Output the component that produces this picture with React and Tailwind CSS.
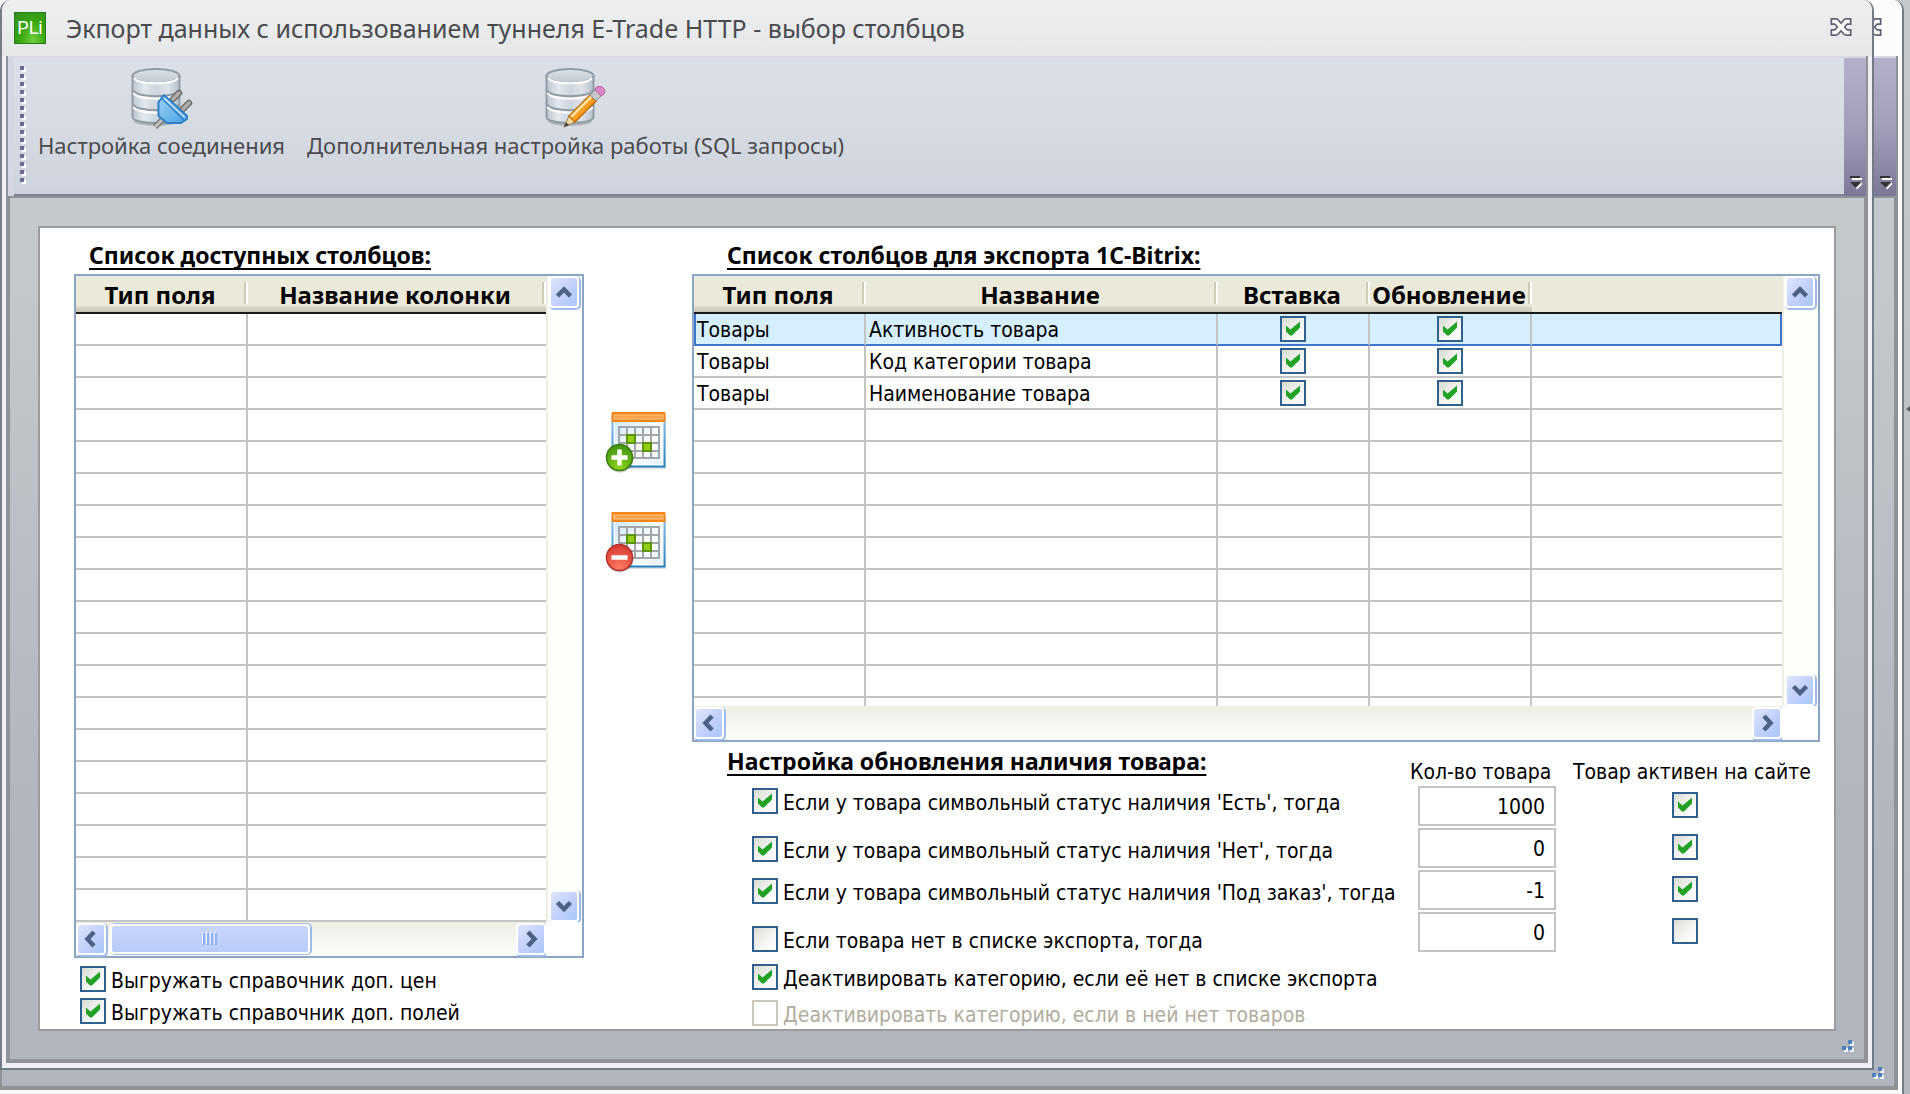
import React from "react";

const UI = "font-['DejaVu_Sans_Condensed','DejaVu_Sans',sans-serif]";
const HEADING = "font-['Noto_Sans',sans-serif] text-[23px] leading-8 font-bold underline decoration-2 underline-offset-4 [text-decoration-skip-ink:none] whitespace-nowrap text-black";

function CheckBox({ id, label, checked = false, disabled = false }) {
  return (
    <span className="inline-grid size-[26px] shrink-0">
      <input
        id={id}
        type="checkbox"
        aria-label={label}
        defaultChecked={checked}
        disabled={disabled}
        className="peer col-start-1 row-start-1 size-[26px] appearance-none border-2 border-[#2f618f] bg-linear-to-br from-[#dadad4] via-[#f3f3f0] to-white disabled:border-[#cbc8bb] disabled:from-white disabled:via-white"
      />
      <svg viewBox="0 0 26 26" className="pointer-events-none invisible col-start-1 row-start-1 size-[26px] peer-checked:visible">
        <path d="M6 9.500 L10.500 13.500 L20 5.500 V11.500 L12 19.500 H10 L6 15.500 Z" fill="#22a127" />
      </svg>
    </span>
  );
}

function CheckLine({ id, text, checked, disabled, height }) {
  return (
    <div className={`flex items-start gap-[5px] ${height}`}>
      <CheckBox id={id} checked={checked} disabled={disabled} />
      <label htmlFor={id} className={`text-[21px] leading-[30px] whitespace-nowrap ${disabled ? "text-[#b0ad9d]" : "text-black"}`}>
        {text}
      </label>
    </div>
  );
}

const chevrons = {
  up: "M5.500 16 L12 9.500 L18.500 16",
  down: "M5.500 8.500 L12 15 L18.500 8.500",
  left: "M15 5 L8.500 12 L15 19",
  right: "M9 5 L15.500 12 L9 19",
};

function ScrollButton({ dir, label }) {
  return (
    <button
      type="button"
      aria-label={label}
      className="flex h-8 w-[30px] shrink-0 items-center justify-center rounded-[4px] border-2 border-white bg-linear-to-br from-[#dfe6fe] via-[#c3d1fc] to-[#aac6f8] shadow-[1px_1px_0_1px_#9dbbe6]"
    >
      <svg viewBox="0 0 24 24" className="size-6" fill="none" stroke="#4d6185" strokeWidth="4.500">
        <path d={chevrons[dir]} />
      </svg>
    </button>
  );
}

function GridFrame({ bodyHeight, thumb, children }) {
  return (
    <div className="border-2 border-[#8aa6c4] bg-white">
      <div className="grid grid-cols-[1fr_36px]">
        <div className={`overflow-hidden ${bodyHeight}`}>{children}</div>
        <div className="flex flex-col items-center justify-between border-l-2 border-[#eeeee6] bg-[#fefefa] pr-[3px]">
          <ScrollButton dir="up" label="Прокрутить вверх" />
          <ScrollButton dir="down" label="Прокрутить вниз" />
        </div>
        <div className="flex h-[34px] items-center bg-linear-to-b from-[#eeede6] to-[#fefefa]">
          <ScrollButton dir="left" label="Прокрутить влево" />
          <div className="flex flex-1 pl-1">
            {thumb && (
              <div className="flex h-[30px] w-[200px] items-center justify-center gap-[2px] rounded-[4px] border-2 border-white bg-linear-to-b from-[#c9d6fc] to-[#b8cbf8] shadow-[1px_0_0_1px_#9dbbe6]">
                {[0, 1, 2, 3].map((i) => (
                  <span key={i} className="h-3 w-[2px] bg-[#8cb0f8] shadow-[-1px_-1px_0_#eef4fe]" />
                ))}
              </div>
            )}
          </div>
          <ScrollButton dir="right" label="Прокрутить вправо" />
        </div>
        <div className="bg-white" />
      </div>
    </div>
  );
}

function HeadCell({ children }) {
  return (
    <th className="h-[38px] border-b-2 border-[#1c1a16] bg-[linear-gradient(#ebe9d9_30px,#ddd9c8_31px,#c9c5b4_36px)] p-0 align-top">
      <div className="flex h-9">
        <span className="flex min-w-0 flex-1 justify-center pt-px font-['Noto_Sans',sans-serif] text-[24px] leading-9 font-bold whitespace-nowrap text-black">
          {children}
        </span>
        <span className="mt-[6px] h-[22px] w-1 border-l-2 border-[#cfcbb9] bg-white" />
      </div>
    </th>
  );
}

const LINE = "h-8 border-b-2 border-[#c4c4c4] p-0";

function AvailableTable() {
  return (
    <table className="w-full table-fixed border-separate border-spacing-0">
      <colgroup>
        <col className="w-[172px]" />
        <col />
      </colgroup>
      <thead>
        <tr>
          <HeadCell>Тип поля</HeadCell>
          <HeadCell>Название колонки</HeadCell>
        </tr>
      </thead>
      <tbody>
        {Array.from({ length: 19 }, (_, i) => (
          <tr key={i}>
            <td className={`${LINE} border-r-2`} />
            <td className={LINE} />
          </tr>
        ))}
      </tbody>
    </table>
  );
}

const exported = ["Активность товара", "Код категории товара", "Наименование товара"];

function ExportTable() {
  return (
    <table className="w-full table-fixed border-separate border-spacing-0">
      <colgroup>
        <col className="w-[172px]" />
        <col className="w-[352px]" />
        <col className="w-[152px]" />
        <col className="w-[162px]" />
        <col />
      </colgroup>
      <thead>
        <tr>
          <HeadCell>Тип поля</HeadCell>
          <HeadCell>Название</HeadCell>
          <HeadCell>Вставка</HeadCell>
          <HeadCell>Обновление</HeadCell>
          <td className="border-b-2 border-[#1c1a16] bg-[#ebe9d9]" />
        </tr>
      </thead>
      <tbody>
        {Array.from({ length: 13 }, (_, i) => {
          const name = exported[i];
          const selected = i === 0;
          const cell = selected
            ? "h-8 border-b-2 border-r-2 border-b-[#3f75cf] border-r-[#c4c4c4] bg-[#d5efff] p-0"
            : `${LINE} border-r-2`;
          const text = "pt-[2px] pl-[3px] text-[21px] leading-7 whitespace-nowrap text-black";
          return (
            <tr key={i}>
              <td className={selected ? `${cell} border-l-2 border-l-[#3f75cf]` : cell}>
                {name && <div className={selected ? "pt-[2px] pl-px text-[21px] leading-7 whitespace-nowrap text-black" : text}>Товары</div>}
              </td>
              <td className={cell}>{name && <div className={text}>{name}</div>}</td>
              <td className={cell}>
                {name && (
                  <div className="flex justify-center">
                    <CheckBox label={`Вставка: ${name}`} checked />
                  </div>
                )}
              </td>
              <td className={cell}>
                {name && (
                  <div className="flex justify-center">
                    <CheckBox label={`Обновление: ${name}`} checked />
                  </div>
                )}
              </td>
              <td
                className={
                  selected ? "h-8 border-r-2 border-b-2 border-[#3f75cf] bg-[#d5efff] p-0" : LINE
                }
              />
            </tr>
          );
        })}
      </tbody>
    </table>
  );
}

function Database() {
  return (
    <g>
      <ellipse cx="26" cy="54" rx="22" ry="5" fill="#000" opacity="0.18" />
      <path d="M2.500 9 V50 C2.500 58 49.500 58 49.500 50 V9 Z" fill="url(#dbBody)" stroke="#929ca6" strokeWidth="2" />
      <path d="M3.500 23.500 C6 31 46 31 48.500 23.500" fill="none" stroke="#929ca6" strokeWidth="2" />
      <path d="M3.500 26 C6 33.500 46 33.500 48.500 26" fill="none" stroke="#fff" strokeWidth="2" />
      <path d="M3.500 37.500 C6 45 46 45 48.500 37.500" fill="none" stroke="#929ca6" strokeWidth="2" />
      <path d="M3.500 40 C6 47.500 46 47.500 48.500 40" fill="none" stroke="#fff" strokeWidth="2" />
      <ellipse cx="26" cy="9" rx="23.500" ry="7" fill="url(#dbTop)" stroke="#929ca6" strokeWidth="2" />
      <path d="M4 11 C8 18 44 18 48 11" fill="none" stroke="#fff" strokeWidth="2" />
    </g>
  );
}

function DbDefs() {
  return (
    <defs>
      <linearGradient id="dbBody">
        <stop offset="0" stopColor="#bcc5cd" />
        <stop offset="0.25" stopColor="#e4e9ee" />
        <stop offset="0.5" stopColor="#cdd5de" />
        <stop offset="0.75" stopColor="#dfe4ea" />
        <stop offset="1" stopColor="#b4bdc6" />
      </linearGradient>
      <linearGradient id="dbTop" x2="0" y2="1">
        <stop offset="0" stopColor="#dde3e8" />
        <stop offset="1" stopColor="#bfc9d1" />
      </linearGradient>
      <linearGradient id="plug" x2="1" y2="1">
        <stop offset="0" stopColor="#9dd3f8" />
        <stop offset="1" stopColor="#4aa0e2" />
      </linearGradient>
    </defs>
  );
}

function ConnectionIcon() {
  return (
    <svg viewBox="0 0 64 64" className="size-16">
      <DbDefs />
      <Database />
      <path d="M43 32 L49 26 M53 42 L59 36" stroke="#6f6f6f" strokeWidth="6.500" strokeLinecap="round" />
      <path d="M43 32 L49 26 M53 42 L59 36" stroke="#b0adab" strokeWidth="3.500" strokeLinecap="round" />
      <path d="M25 60 L32 53" stroke="#77777a" strokeWidth="6" />
      <path d="M25 60 L32 53" stroke="#c2c0bd" strokeWidth="3" />
      <path d="M34 28 L57 49 V52 L51 56 H37 L28.500 49 V35 Z" fill="url(#plug)" stroke="#2f7fc4" strokeWidth="2" strokeLinejoin="round" />
      <path d="M32 31.500 L54 53" stroke="#2f7fc4" strokeWidth="1.500" />
      <path d="M34.500 31.500 L55 50.500" stroke="#c4e5fb" strokeWidth="1.500" />
    </svg>
  );
}

function SqlIcon() {
  return (
    <svg viewBox="0 0 64 64" className="size-16">
      <DbDefs />
      <Database />
      <path d="M20 60 L25 49 L31 55 Z" fill="#f4d9a4" stroke="#9a7b4a" strokeWidth="1" />
      <path d="M20 60 L22 55.500 L25 58 Z" fill="#3c3a38" />
      <path d="M25 49 L46 28 L52 34 L31 55 Z" fill="#fb9e1f" stroke="#c06c0a" strokeWidth="1.500" />
      <path d="M27 50 L48 29" stroke="#ffe3a3" strokeWidth="2.500" />
      <path d="M46 28 L51 23 L57 29 L52 34 Z" fill="#c5c7ca" stroke="#85888c" strokeWidth="1" />
      <path d="M51 23 C52 16 64 20 60 27 L57 29 Z" fill="#dd86c6" stroke="#b763a3" strokeWidth="1" />
    </svg>
  );
}

function ColumnsIcon({ kind }) {
  const add = kind === "add";
  return (
    <svg viewBox="0 0 62 62" className="h-[62px] w-[62px]">
      <defs>
        <linearGradient id="sheet" x1="0" y1="0" x2="1" y2="1">
          <stop offset="0" stopColor="#cfeafc" />
          <stop offset="0.6" stopColor="#ffffff" />
          <stop offset="1" stopColor="#e3f2fc" />
        </linearGradient>
        <linearGradient id="edge" x2="0" y2="1">
          <stop offset="0" stopColor="#8cc4ea" />
          <stop offset="1" stopColor="#2381bf" />
        </linearGradient>
        <radialGradient id="green" cx="0.5" cy="0.9" r="0.9">
          <stop offset="0" stopColor="#8fd41c" />
          <stop offset="1" stopColor="#3f9410" />
        </radialGradient>
        <radialGradient id="red" cx="0.5" cy="0.9" r="0.9">
          <stop offset="0" stopColor="#ff7a62" />
          <stop offset="1" stopColor="#d63a30" />
        </radialGradient>
      </defs>
      <rect x="8" y="8" width="53" height="50" fill="#000" opacity="0.12" />
      <rect x="7.500" y="5" width="52" height="50.500" fill="#fff" stroke="url(#edge)" strokeWidth="2" />
      <rect x="10" y="11" width="47" height="42" fill="url(#sheet)" />
      <rect x="6.500" y="1" width="54" height="10" rx="1" fill="#f7861a" />
      <rect x="9" y="4" width="49" height="4" fill="#fba04a" stroke="#ffc98a" strokeWidth="1" />
      <path d="M13 16 H55 M14 24 H54 M14 32 H54 M14 40 H54 M13 47 H55 M14 15 V48 M22 15 V48 M30 15 V48 M38 15 V48 M46 15 V48 M54 15 V48" stroke="#a3a5a8" strokeWidth="2" />
      <rect x="22" y="24" width="8" height="8" fill="#93cf10" stroke="#5b9408" strokeWidth="2" />
      <rect x="38" y="32" width="8" height="8" fill="#93cf10" stroke="#5b9408" strokeWidth="2" />
      <circle cx="15" cy="48" r="13.500" fill="#000" opacity="0.2" />
      <circle cx="14.500" cy="46.500" r="13" fill={add ? "url(#green)" : "url(#red)"} stroke={add ? "#3a7d10" : "#b5302a"} strokeWidth="1.500" />
      <path d={add ? "M6.500 46.500 H22.500 M14.500 38.500 V54.500" : "M6.500 46.500 H22.500"} stroke="#fff" strokeWidth="4.500" />
    </svg>
  );
}

function CloseGlyph() {
  const shape = "M4 3.500 H6 L16 14.500 H18 M18 3.500 H16 L6 14.500 H4";
  return (
    <svg viewBox="0 0 22 18" className="h-[18px] w-[22px]" fill="none">
      <path d={shape} stroke="#5f6277" strokeWidth="7" strokeLinejoin="round" strokeLinecap="square" />
      <path d={shape} stroke="#fff" strokeWidth="3.500" strokeLinecap="square" />
    </svg>
  );
}

function WindowFrame({ active, title, toolbar, children }) {
  return (
    <div className={`flex flex-1 flex-col rounded-t-[10px] border-x-2 border-b-2 border-[#727c86] ${active ? "bg-[#eef0f3]" : "bg-[#fafafa]"}`}>
      <header
        className={`flex h-14 shrink-0 items-center rounded-t-[10px] pr-5 pl-3 ${
          active ? "bg-linear-to-b from-[#eeeff1] to-[#e5e7e9]" : "bg-[#fcfcfc]"
        }`}
      >
        {title}
        <button type="button" aria-label="Закрыть" className="mb-[2px] ml-auto">
          <CloseGlyph />
        </button>
      </header>
      <div className="mx-1 mb-[5px] flex flex-1 flex-col border-x-2 border-[#909396]">
        <div className="flex h-[140px] shrink-0 border-t-2 border-[#d9d9e5] bg-[#d5d6e4]">
          <div className="ml-[6px] flex flex-1 border-b-2 border-[#7f7f9b] bg-linear-to-b from-[#dbdfe7] via-[#d7dbe2] to-[#ced4dd]">
            <div className="mt-2 ml-[6px] flex w-6 flex-col gap-1">
              {toolbar && Array.from({ length: 15 }, (_, i) => (
                <span key={i} className="size-1 bg-[#6c6a91] shadow-[2px_2px_0_#fff]" />
              ))}
            </div>
            {toolbar}
          </div>
          <button type="button" aria-label="Параметры панели" className="flex w-[22px] items-end justify-center bg-linear-to-b from-[#b3b1c9] via-[#a19fb8] to-[#7b7896] pb-[6px] pl-[2px]">
            <svg viewBox="0 0 14 16" className="h-4 w-[14px]">
              <path d="M3 4 H13 V6 H3 Z M7 14 L13 8 V10.500 L8 15.500 Z" fill="#fff" />
              <path d="M1 2 H11 V4 H1 Z M1 8 H12 L6.500 13.500 Z" fill="#333" />
            </svg>
          </button>
        </div>
        <div className="relative flex flex-1 flex-col border-x-2 border-t-2 border-b-4 border-[#909396] bg-[linear-gradient(#c4c9cb,#c3c8cc_10%,#b0b5be_75%)] p-7">
          {children}
          <svg viewBox="0 0 12 12" className="absolute right-[10px] bottom-[7px] size-3">
            <path d="M8 2 h4 v4 h-4 Z M2 8 h4 v4 h-4 Z M8 8 h4 v4 h-4 Z" fill="#f1f5fa" />
            <path d="M6 0 h4 v4 h-4 Z M0 6 h4 v4 h-4 Z M6 6 h4 v4 h-4 Z" fill="#4f80bd" />
          </svg>
        </div>
      </div>
    </div>
  );
}

function ToolButton({ icon, children }) {
  return (
    <button type="button" className="flex flex-col items-center self-start pt-[9px] font-['Noto_Sans',sans-serif] text-[22px] leading-7 whitespace-nowrap text-[#4b4b4f]">
      {icon}
      {children}
    </button>
  );
}

const rules = [
  { text: "Если у товара символьный статус наличия 'Есть', тогда", checked: true, height: "h-12" },
  { text: "Если у товара символьный статус наличия 'Нет', тогда", checked: true, height: "h-[42px]" },
  { text: "Если у товара символьный статус наличия 'Под заказ', тогда", checked: true, height: "h-12" },
  { text: "Если товара нет в списке экспорта, тогда", checked: false, height: "h-[38px]" },
  { text: "Деактивировать категорию, если её нет в списке экспорта", checked: true, height: "h-9" },
  { text: "Деактивировать категорию, если в ней нет товаров", checked: false, disabled: true, height: "h-[26px]" },
];

const amounts = ["1000", "0", "-1", "0"];

export default function App() {
  return (
    <div className={`relative flex min-h-screen w-full overflow-hidden bg-linear-to-b from-[#c4c9cc] to-[#b3b7c0] pr-9 pb-6 ${UI}`}>
      <div className="absolute top-0 right-[6px] -bottom-[3px] -left-2 flex">
        <WindowFrame />
      </div>
      <svg viewBox="0 0 4 6" className="absolute top-[406px] right-0 h-[6px] w-1">
        <path d="M4 0 V6 L0 3 Z" fill="#5a5d63" />
      </svg>

      <div className="relative flex min-w-0 flex-1">
        <WindowFrame
          active
          title={
            <>
              <span className="flex size-8 items-center justify-center border border-[#2b7a1c] bg-radial-[at_60%_90%] from-[#6fd03c] via-[#38a50f] to-[#2f8f1d] font-['Roboto',sans-serif] text-[18px] leading-none text-white">
                PLi
              </span>
              <h1 className="ml-5 font-['Noto_Sans',sans-serif] text-[25px] leading-9 whitespace-nowrap text-[#4b4b4f]">
                Экпорт данных с использованием туннеля E-Trade HTTP - выбор столбцов
              </h1>
            </>
          }
          toolbar={
            <div className="-ml-[6px] flex gap-[22px]">
              <ToolButton icon={<ConnectionIcon />}>Настройка соединения</ToolButton>
              <ToolButton icon={<SqlIcon />}>Дополнительная настройка работы (SQL запросы)</ToolButton>
            </div>
          }
        >
          <main className="grid flex-1 grid-cols-[510fr_108px_1128fr] border-2 border-[#999b9c] bg-white pr-[14px] pl-[34px]">
            <section className="min-w-0 pt-[11px]">
              <h2 className={`mb-[3px] pl-[15px] ${HEADING}`}>Список доступных столбцов:</h2>
              <GridFrame bodyHeight="h-[646px]" thumb>
                <AvailableTable />
              </GridFrame>
              <div className="flex flex-col gap-[6px] pt-2 pl-[6px]">
                <CheckLine id="prices" text="Выгружать справочник доп. цен" checked height="h-[26px]" />
                <CheckLine id="fields" text="Выгружать справочник доп. полей" checked height="h-[26px]" />
              </div>
            </section>

            <div className="flex flex-col items-center gap-[38px] pt-[183px] pr-1">
              <button type="button" aria-label="Добавить столбец">
                <ColumnsIcon kind="add" />
              </button>
              <button type="button" aria-label="Удалить столбец">
                <ColumnsIcon kind="remove" />
              </button>
            </div>

            <section className="min-w-0 pt-[11px]">
              <h2 className={`mb-[3px] pl-[35px] ${HEADING}`}>Список столбцов для экспорта 1C-Bitrix:</h2>
              <GridFrame bodyHeight="h-[430px]">
                <ExportTable />
              </GridFrame>
              <div className="flex">
                <div className="min-w-0 flex-1 pt-[3px]">
                  <h2 className={`mb-[11px] pl-[35px] ${HEADING}`}>Настройка обновления наличия товара:</h2>
                  <div className="pl-[60px]">
                    {rules.map((r, i) => (
                      <CheckLine key={i} id={`rule-${i}`} {...r} />
                    ))}
                  </div>
                </div>
                <div className="w-[163px] shrink-0 pt-4 text-[21px] leading-7 text-black">
                  <div className="whitespace-nowrap">Кол-во товара</div>
                  <div className="ml-2 flex w-[138px] flex-col gap-[2px]">
                    {amounts.map((a, i) => (
                      <input
                        key={i}
                        type="text"
                        aria-label={`Кол-во товара ${i + 1}`}
                        defaultValue={a}
                        className="h-10 w-full border-2 border-[#c4c4c4] bg-white pt-px pr-[9px] text-right text-[21px]"
                      />
                    ))}
                  </div>
                </div>
                <div className="w-[247px] shrink-0 pt-4 text-[21px] leading-7 text-black">
                  <div className="whitespace-nowrap">Товар активен на сайте</div>
                  <div className="flex flex-col gap-4 pt-[6px] pl-[99px]">
                    {amounts.map((_, i) => (
                      <CheckBox key={i} label={`Товар активен на сайте ${i + 1}`} checked={i < 3} />
                    ))}
                  </div>
                </div>
              </div>
            </section>
          </main>
        </WindowFrame>
      </div>
    </div>
  );
}
